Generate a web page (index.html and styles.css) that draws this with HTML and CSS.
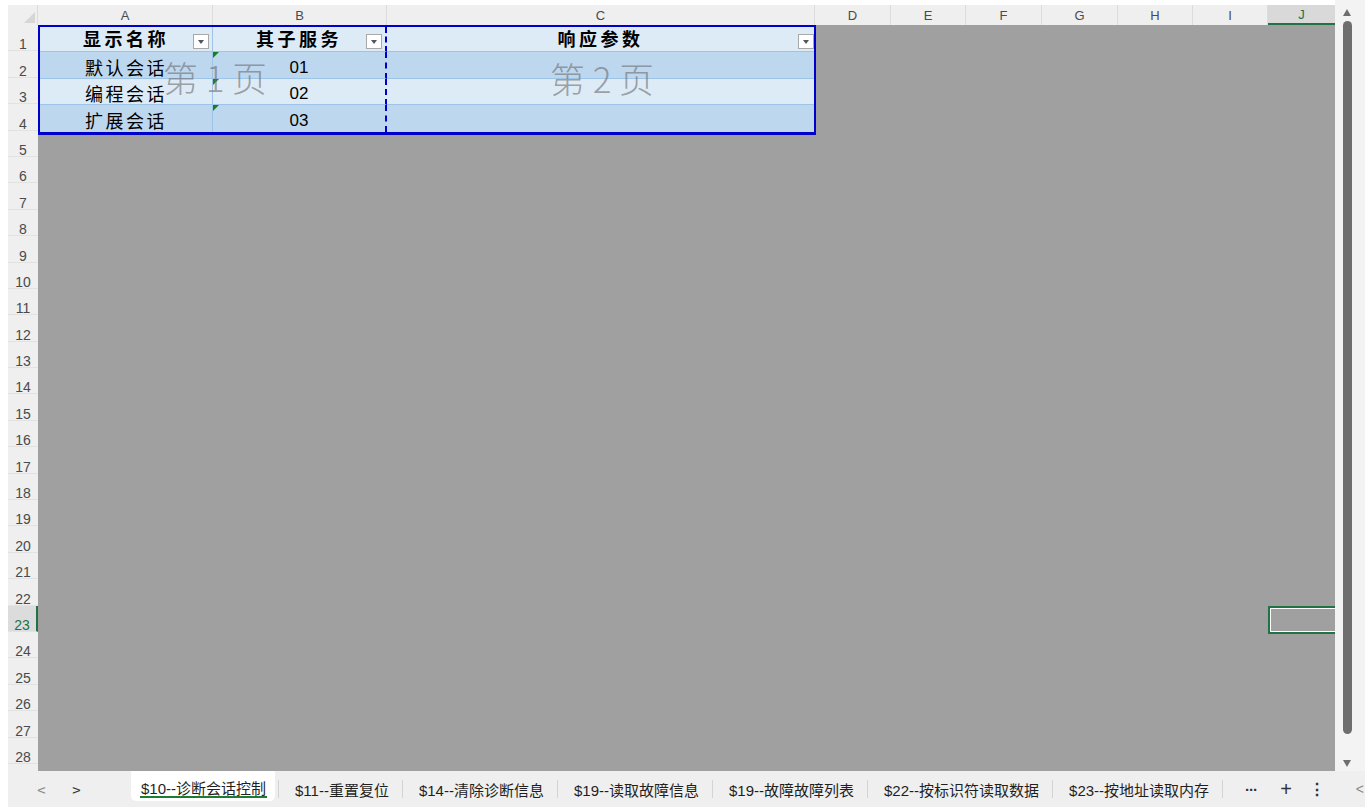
FILE: index.html
```html
<!DOCTYPE html>
<html lang="zh-CN">
<head>
<meta charset="utf-8">
<title>Sheet</title>
<link rel="stylesheet" href="styles.css">
</head>
<body>
<div class="app">
  <div class="top">
    <div class="sheet">
      <div class="colhdr">
        <div class="corner"><span class="corner-tri"></span></div>
        <div class="ch w175">A</div>
        <div class="ch w174">B</div>
        <div class="ch w428">C</div>
        <div class="ch w76">D</div>
        <div class="ch w75">E</div>
        <div class="ch w76">F</div>
        <div class="ch w76">G</div>
        <div class="ch w75">H</div>
        <div class="ch w75">I</div>
        <div class="ch w67 ch-sel">J</div>
      </div>
      <div class="body">
        <div class="rowhdr">
          <div class="rh">1</div><div class="rh">2</div><div class="rh">3</div><div class="rh">4</div>
          <div class="rh">5</div><div class="rh">6</div><div class="rh">7</div><div class="rh">8</div>
          <div class="rh">9</div><div class="rh">10</div><div class="rh">11</div><div class="rh">12</div>
          <div class="rh">13</div><div class="rh">14</div><div class="rh">15</div><div class="rh">16</div>
          <div class="rh">17</div><div class="rh">18</div><div class="rh">19</div><div class="rh">20</div>
          <div class="rh">21</div><div class="rh">22</div><div class="rh rh-sel">23</div><div class="rh">24</div>
          <div class="rh">25</div><div class="rh">26</div><div class="rh">27</div><div class="rh">28</div>
          <div class="rh"></div>
        </div>
        <div class="grid">
          <div class="tbl">
            <div class="c hd ca">显示名称<span class="flt"></span></div>
            <div class="c hd cb">其子服务<span class="flt"></span></div>
            <div class="c hd cc">响应参数<span class="flt"></span></div>

            <div class="c r-dark ca txt">默认会话</div>
            <div class="c r-dark cb num"><span class="gtri"></span>01</div>
            <div class="c r-dark cc"></div>

            <div class="c r-light ca txt">编程会话</div>
            <div class="c r-light cb num"><span class="gtri"></span>02</div>
            <div class="c r-light cc"></div>

            <div class="c r-dark ca txt last">扩展会话</div>
            <div class="c r-dark cb num last"><span class="gtri"></span>03</div>
            <div class="c r-dark cc last"></div>
          </div>
          <div class="wm wm1">第 1 页</div>
          <div class="wm wm2">第 2 页</div>
          <div class="selbox"></div>
        </div>
      </div>
    </div>
    <div class="vscroll">
      <span class="arrow up"></span>
      <div class="thumb"></div>
      <span class="arrow down"></span>
    </div>
  </div>
  <div class="tabs">
    <span class="nav nav-prev">&lt;</span>
    <span class="nav nav-next">&gt;</span>
    <span class="tab active">$10--诊断会话控制</span>
    <span class="sep"></span>
    <span class="tab">$11--重置复位</span>
    <span class="sep"></span>
    <span class="tab">$14--清除诊断信息</span>
    <span class="sep"></span>
    <span class="tab">$19--读取故障信息</span>
    <span class="sep"></span>
    <span class="tab">$19--故障故障列表</span>
    <span class="sep"></span>
    <span class="tab">$22--按标识符读取数据</span>
    <span class="sep"></span>
    <span class="tab">$23--按地址读取内存</span>
    <span class="sep"></span>
    <span class="tool more">···</span>
    <span class="tool plus">+</span>
    <span class="tool kebab">⋮</span>
    <span class="edge">&lt;</span>
  </div>
</div>
</body>
</html>
```

FILE: styles.css
```css
* { box-sizing: border-box; }
html, body { margin: 0; padding: 0; background: #ffffff; }
body { font-family: "Liberation Sans", "Noto Sans CJK SC", sans-serif; }

.app {
  width: 1365px;
  height: 811px;
  display: flex;
  flex-direction: column;
  overflow: hidden;
}

.top {
  height: 771px;
  display: flex;
}

.sheet {
  width: 1335px;
  padding-left: 8px;
  padding-top: 5px;
  display: flex;
  flex-direction: column;
}

/* column headers */
.colhdr {
  height: 20px;
  display: flex;
  background: #efefef;
}
.corner {
  width: 30px;
  position: relative;
  border-right: 1px solid #dcdcdc;
}
.corner-tri {
  position: absolute;
  right: 2px;
  bottom: 2px;
  width: 0;
  height: 0;
  border-left: 11px solid transparent;
  border-bottom: 11px solid #d6d6d6;
}
.ch {
  display: flex;
  align-items: center;
  justify-content: center;
  font-size: 13px;
  color: #4a4a4a;
  border-right: 1px solid #dcdcdc;
  padding-top: 1px;
}
.w175 { width: 175px; }
.w174 { width: 174px; }
.w428 { width: 428px; }
.w76 { width: 76px; }
.w75 { width: 75px; }
.w67 { width: 67px; border-right: none; }
.ch-sel {
  background: #d9d9d9;
  color: #217346;
  border-bottom: 2px solid #217346;
}

.body {
  flex: 1;
  display: flex;
  overflow: hidden;
}

/* row headers */
.rowhdr {
  width: 30px;
  flex: none;
  background: #efefef;
  display: flex;
  flex-direction: column;
}
.rh {
  height: 26.4px;
  flex: none;
  display: flex;
  align-items: flex-end;
  justify-content: center;
  font-size: 14px;
  line-height: 11px;
  color: #4a4a4a;
  border-bottom: 1px solid #e2e2e2;
}
.rh-sel {
  background: #dcdcdc;
  color: #217346;
  border-right: 2px solid #217346;
}

/* grid */
.grid {
  flex: 1;
  position: relative;
  background: #a0a0a0;
  overflow: hidden;
}

.tbl {
  width: 778px;
  display: grid;
  grid-template-columns: 173px 174px 427px;
  grid-template-rows: 25.4px 26.4px 26.4px 26.4px;
  border: 2px solid #0000cd;
  border-bottom-width: 3px;
}
.c {
  position: relative;
  display: flex;
  align-items: center;
  justify-content: center;
  border-bottom: 1px solid #9dc3e6;
}
.c.last { border-bottom: none; }
.ca { border-right: 1px solid #9dc3e6; }
.cb { border-right: 2px dashed #0000cd; }
.hd {
  background: #ddebf7;
  font-family: "Noto Sans CJK SC", sans-serif;
  font-weight: 700;
  font-size: 18px;
  letter-spacing: 3.5px;
  color: #000;
  padding-bottom: 2px;
}
.r-dark { background: #bdd7ee; }
.r-light { background: #ddebf7; }
.txt {
  font-family: "Noto Sans CJK SC", sans-serif;
  font-size: 18px;
  letter-spacing: 2.5px;
  color: #000;
  padding-top: 3px;
}
.num {
  font-family: "Liberation Sans", sans-serif;
  font-size: 17px;
  color: #000;
  padding-top: 5px;
}

.flt {
  position: absolute;
  right: 3px;
  top: 7px;
  width: 16px;
  height: 15px;
  background: #ffffff;
  border: 1px solid #a8a8a8;
}
.flt::after {
  content: "";
  position: absolute;
  left: 4px;
  top: 5px;
  border-left: 3.5px solid transparent;
  border-right: 3.5px solid transparent;
  border-top: 4px solid #555;
}
.cc .flt { right: 0; }

.gtri {
  position: absolute;
  left: 0;
  top: 0;
  width: 0;
  height: 0;
  border-top: 6px solid #1b7f22;
  border-right: 6px solid transparent;
}

.wm {
  position: absolute;
  transform: translate(-50%, -50%);
  font-family: "Noto Sans CJK SC", sans-serif;
  font-weight: 300;
  font-size: 35px;
  color: rgba(110, 110, 110, 0.62);
  white-space: nowrap;
  pointer-events: none;
}
.wm1 { left: 177px; top: 51px; }
.wm2 { left: 564px; top: 52px; }

.selbox {
  position: absolute;
  left: 1230px;
  top: 581px;
  width: 72px;
  height: 28px;
  border: 2px solid #217346;
  box-shadow: inset 0 0 0 1px #ffffff;
}

/* vertical scrollbar */
.vscroll {
  width: 30px;
  padding-top: 5px;
  padding-right: 6px;
  background: #f3f3f3;
  display: flex;
  flex-direction: column;
  align-items: center;
}
.arrow {
  width: 0;
  height: 0;
  border-left: 4.5px solid transparent;
  border-right: 4.5px solid transparent;
  flex: none;
}
.arrow.up {
  margin-top: 4px;
  border-bottom: 7px solid #6e6e6e;
}
.arrow.down {
  margin-top: 26px;
  border-top: 7px solid #6e6e6e;
}
.thumb {
  margin-top: 5px;
  width: 9px;
  height: 713px;
  border-radius: 5px;
  background: #6e6e6e;
  flex: none;
}

/* tabs */
.tabs {
  height: 36px;
  margin-left: 8px;
  background: #efefef;
  display: flex;
  align-items: center;
  font-family: "Liberation Sans", "Noto Sans CJK SC", sans-serif;
  font-size: 15px;
  color: #1f1f1f;
  position: relative;
}
.nav {
  width: 35px;
  text-align: center;
  font-family: "Noto Sans CJK SC", sans-serif;
  font-size: 15px;
}
.nav-prev { margin-left: 16px; color: #8a8a8a; }
.nav-next { color: #333; }
.tab {
  height: 36px;
  display: flex;
  align-items: center;
  padding: 0 13px 0 16px;
  white-space: nowrap;
}
.tab.active {
  margin-left: 37px;
  height: 30px;
  align-self: flex-start;
  padding: 2px 9px 0 10px;
  background: #ffffff;
  border-radius: 0 0 5px 5px;
  position: relative;
}
.tab.active::after {
  content: "";
  position: absolute;
  left: 9px;
  right: 8px;
  bottom: 3px;
  height: 2px;
  background: #1e7b34;
}
.tab.active + .sep { margin-left: 3px; }
.sep {
  width: 1px;
  height: 18px;
  background: #d4d4d4;
  flex: none;
}
.tool {
  width: 32px;
  text-align: center;
  color: #333;
}
.more { margin-left: 12px; font-weight: 700; letter-spacing: -1px; }
.plus { margin-left: 3px; font-size: 20px; font-weight: 300; }
.kebab { margin-left: -1px; font-size: 16px; font-weight: 700; }
.edge {
  margin-left: auto;
  margin-right: 1px;
  color: #8a8a8a;
  font-size: 14px;
  font-family: "Liberation Sans", sans-serif;
}
```
